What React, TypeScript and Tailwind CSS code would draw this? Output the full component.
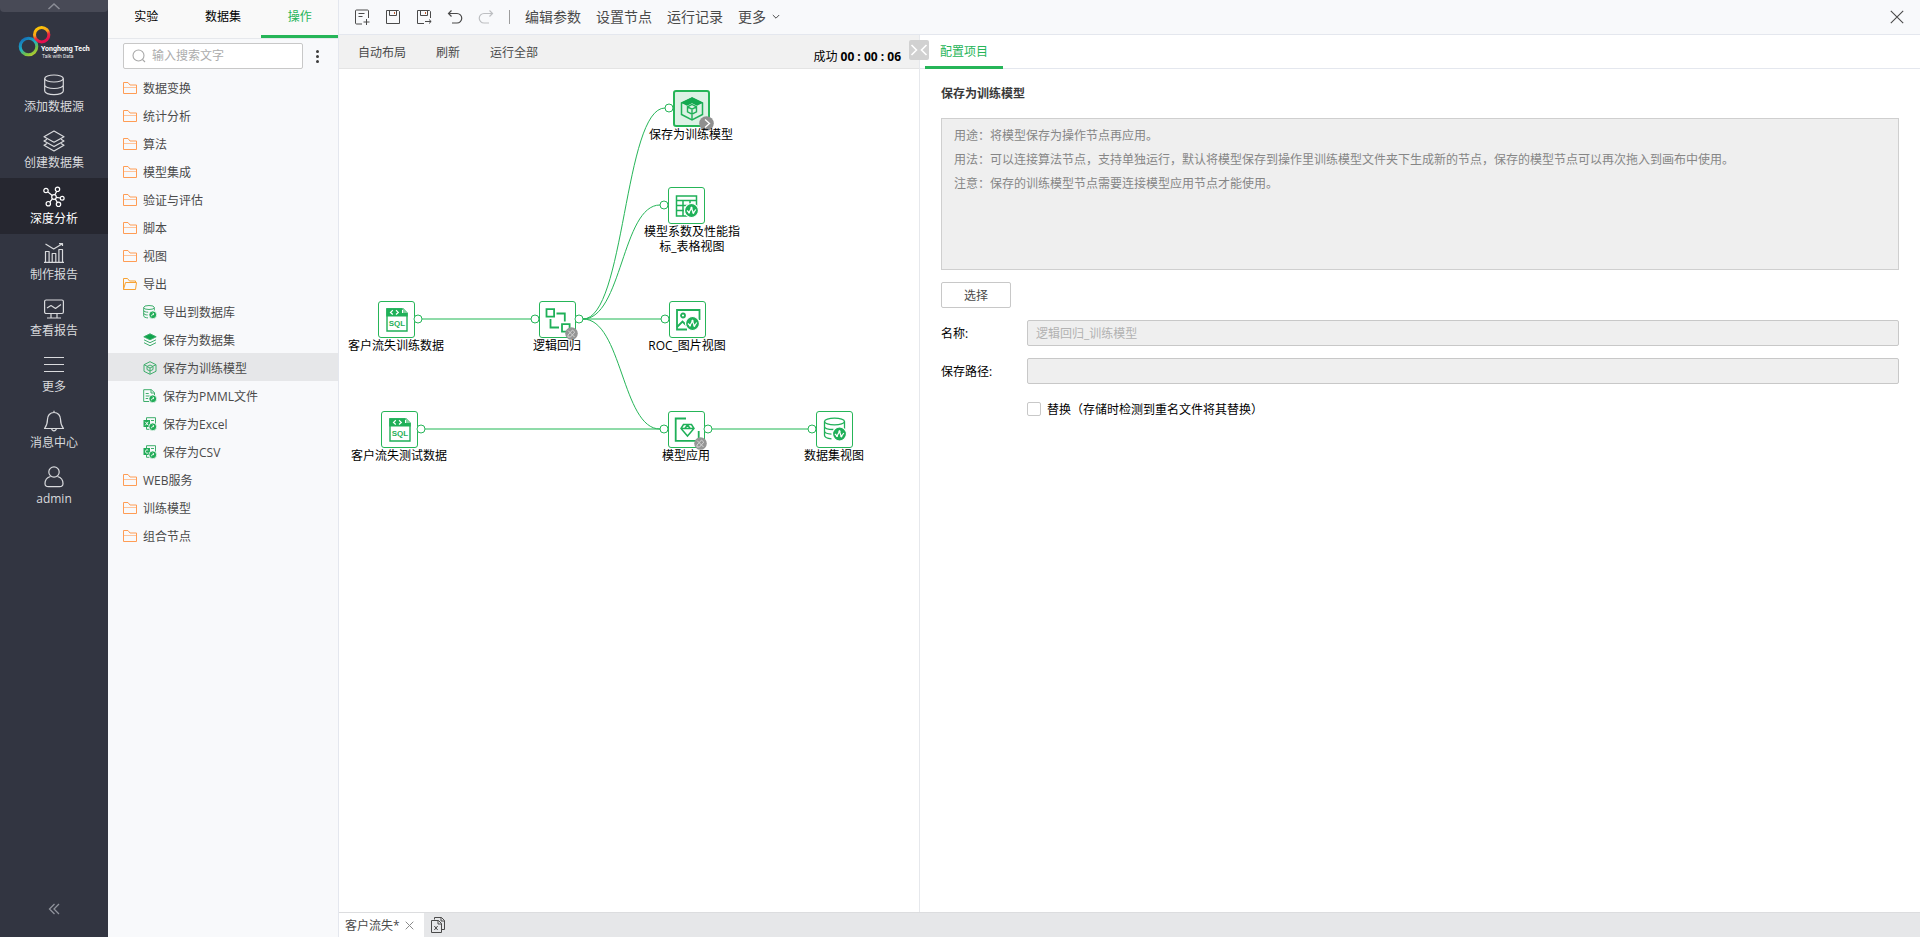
import type { ReactNode } from 'react';

const GREEN = '#26b558';

/* ---------- icons ---------- */

function Logo() {
  return (
    <svg width="76" height="40" viewBox="0 0 76 40" role="img" aria-label="Yonghong Tech">
      <defs>
        <linearGradient id="ringWarm" x1="0" y1="0" x2="0.4" y2="1">
          <stop offset="0" stopColor="#ffd000" />
          <stop offset="0.5" stopColor="#f9a11b" />
          <stop offset="0.7" stopColor="#ee2f3c" />
          <stop offset="1" stopColor="#e5104f" />
        </linearGradient>
        <linearGradient id="ringCool" x1="0.2" y1="0" x2="0.8" y2="1">
          <stop offset="0" stopColor="#1470b8" />
          <stop offset="0.45" stopColor="#1fb0c4" />
          <stop offset="0.75" stopColor="#6fc04a" />
          <stop offset="1" stopColor="#b5cc2e" />
        </linearGradient>
      </defs>
      <circle cx="12.5" cy="22.5" r="8.3" fill="none" stroke="url(#ringCool)" strokeWidth="3" />
      <circle cx="25.7" cy="10.7" r="7.2" fill="none" stroke="url(#ringWarm)" strokeWidth="3" />
      <text x="25" y="27" fontSize="7" fontWeight="700" fill="#ffffff" fontFamily="Roboto, sans-serif">Yonghong Tech</text>
      <text x="26" y="34" fontSize="5" fill="#e8e8ea" fontFamily="Roboto, sans-serif">Talk with Data</text>
    </svg>
  );
}

function NavIcon({ children }: { children: ReactNode }) {
  return (
    <svg width="22" height="22" viewBox="0 0 22 22" fill="none" stroke="currentColor" strokeWidth="1.2" strokeLinejoin="round" aria-hidden="true">
      {children}
    </svg>
  );
}

const navIcons = {
  source: (
    <NavIcon>
      <ellipse cx="11" cy="4.5" rx="9.3" ry="3.5" />
      <path d="M1.7 4.5v12.6c0 2 4.1 3.6 9.3 3.6s9.3-1.6 9.3-3.6V4.5M1.7 11c0 2 4.1 3.5 9.3 3.5s9.3-1.5 9.3-3.5" />
    </NavIcon>
  ),
  layers: (
    <NavIcon>
      <path d="M11 1 21 6.7 11 12.2 1 6.7z" />
      <path d="M4 9.3 1 11l10 5.6L21 11l-3-1.7M4 13.5 1 15.3l10 5.7 10-5.7-3-1.8" />
    </NavIcon>
  ),
  graph: (
    <NavIcon>
      <circle cx="11" cy="11" r="2.3" />
      <circle cx="3" cy="4.5" r="2.2" />
      <circle cx="14.5" cy="3.3" r="2.2" />
      <circle cx="19.2" cy="12.3" r="1.9" />
      <circle cx="5.3" cy="17.7" r="2.2" />
      <circle cx="15.5" cy="18.3" r="2.2" />
      <path d="m4.8 5.9 4.4 3.6M13.7 5.4l-1.8 3.4M13.3 11.3l4 .7M9.4 12.8l-2.6 3.2M12.3 13l2 3.4" />
    </NavIcon>
  ),
  chart: (
    <NavIcon>
      <path d="M1 20.4h20M2.5 20.4V9.5h3.6v10.9M9.2 20.4v-8.9h3.6v8.9M15.9 20.4V7.5h3.6v12.9" />
      <path d="m2.5 2 8.2 5L19 2M16 1.6h3.5V4" />
    </NavIcon>
  ),
  monitor: (
    <NavIcon>
      <rect x="1.6" y="2" width="18.800" height="13.5" rx="1.5" />
      <path d="m4 10 4-2.5 4.5 3L18 6.5M8 15.5v4M14 15.5v4M4 20h14" />
    </NavIcon>
  ),
  more: (
    <NavIcon>
      <path d="M1 3.5h20M1 10.5h20M1 17.5h20" />
    </NavIcon>
  ),
  bell: (
    <NavIcon>
      <path d="M11 2.5c-4 0-6.5 3-6.5 6.8 0 4.5-1 6.7-3 9.2h19c-2-2.5-3-4.7-3-9.2 0-3.8-2.5-6.8-6.5-6.8zM11 2.5V.7M8.6 18.5c.2 1.5 1 2.3 2.4 2.3s2.2-.8 2.4-2.3" />
    </NavIcon>
  ),
  user: (
    <NavIcon>
      <circle cx="11" cy="6" r="5.2" />
      <path d="M7.5 10.5C4 11.5 2 14 2 17.5c0 2.3 1 3.2 3.5 3.2h11c2.5 0 3.5-.9 3.5-3.2 0-3.5-2-6-5.5-7" />
    </NavIcon>
  ),
};

function Folder({ open }: { open?: boolean }) {
  return (
    <svg width="14" height="14" viewBox="0 0 14 14" fill="none" stroke="#ff9d55" strokeWidth="1" aria-hidden="true">
      {open ? (
        <path d="M.5 12.5v-11h4l2 2.500h6v2M.5 12.500l2-7h11l-1 7z" stroke="#f7a233" />
      ) : (
        <>
          <path d="M.5 12.500v-11h4.500l2 2.500h6.500v8.500z" />
          <path d="M1 6.500h12" stroke="#ffc49a" />
        </>
      )}
    </svg>
  );
}

function SmallIcon({ children }: { children: ReactNode }) {
  return (
    <svg width="14" height="14" viewBox="0 0 14 14" fill="none" stroke="#3fae6c" strokeWidth="1" aria-hidden="true">
      {children}
    </svg>
  );
}

function ExportDot() {
  return (
    <g>
      <circle cx="9.8" cy="9.8" r="3.9" fill="#22ac58" stroke="#f8f9fb" strokeWidth="0.8" />
      <path d="M8.300 11.300c.2-1.600 1-2.200 2.400-2.200M9.700 7.800l1.300 1.300-1.300 1.200" stroke="#fff" strokeWidth="0.8" />
    </g>
  );
}

const leafIcons = {
  database: (
    <SmallIcon>
      <ellipse cx="6" cy="2.5" rx="5.3" ry="2" />
      <path d="M.7 2.5V11c0 1 2 1.800 4.300 1.900M11.300 2.500v3M.7 5.500c0 1 2 1.700 4.500 1.700M.7 8.300c0 1 2 1.700 4 1.700" />
      <ExportDot />
    </SmallIcon>
  ),
  dataset: (
    <SmallIcon>
      <path d="m7 .8 6.200 3L7 6.800.8 3.800z" fill="#0fa44c" />
      <path d="M1 6.800 7 9.700l6-2.900M1 9.700l6 3 6-3" />
    </SmallIcon>
  ),
  model: (
    <SmallIcon>
      <path d="m7 .7 6 3v6.600l-6 3-6-3V3.700zM1 3.700l3.300 1.600M13 3.700 9.700 5.300M7 10v3" />
      <path d="m7 4 3 1.500v3L7 10 4 8.500v-3zM4 5.500 7 7l3-1.500M7 7v3" />
    </SmallIcon>
  ),
  pmml: (
    <SmallIcon>
      <path d="M6 12.500H.7V.7h7.600l3.200 3v3M8 .7V4h3.500M2.700 4.500h3M2.700 7h4M2.700 9.500h2.500" />
      <ExportDot />
    </SmallIcon>
  ),
  excel: (
    <SmallIcon>
      <path d="M3.500 3V.7h9V7M3.500 10v2.300h3M8 3.500h3" />
      <rect x="0.5" y="3" width="6.5" height="7" fill="#22ac58" stroke="none" />
      <path d="m2.300 4.800 3 3.500M5.300 4.800l-3 3.500" stroke="#fff" />
      <ExportDot />
    </SmallIcon>
  ),
  csv: (
    <SmallIcon>
      <path d="M3.500 3V.7h9V7M3.500 10v2.300h3M8 3.500h3" />
      <rect x="0.5" y="3" width="6.5" height="7" fill="#22ac58" stroke="none" />
      <path d="M5.200 5.200c-.6-.6-2.700-.7-2.700 1.300s2.100 1.900 2.700 1.300" stroke="#fff" />
      <ExportDot />
    </SmallIcon>
  ),
};

function ToolIcon({ children }: { children: ReactNode }) {
  return (
    <svg width="16" height="16" viewBox="0 0 16 16" fill="none" stroke="currentColor" strokeWidth="1" aria-hidden="true">
      {children}
    </svg>
  );
}

/* ---------- data ---------- */

type NavKey = keyof typeof navIcons;
type LeafKey = keyof typeof leafIcons;

const navItems: { key: NavKey; label: string; active?: boolean }[] = [
  { key: 'source', label: '添加数据源' },
  { key: 'layers', label: '创建数据集' },
  { key: 'graph', label: '深度分析', active: true },
  { key: 'chart', label: '制作报告' },
  { key: 'monitor', label: '查看报告' },
  { key: 'more', label: '更多' },
  { key: 'bell', label: '消息中心' },
  { key: 'user', label: 'admin' },
];

const tree: { label: string; leaf?: LeafKey; open?: boolean; selected?: boolean }[] = [
  { label: '数据变换' },
  { label: '统计分析' },
  { label: '算法' },
  { label: '模型集成' },
  { label: '验证与评估' },
  { label: '脚本' },
  { label: '视图' },
  { label: '导出', open: true },
  { label: '导出到数据库', leaf: 'database' },
  { label: '保存为数据集', leaf: 'dataset' },
  { label: '保存为训练模型', leaf: 'model', selected: true },
  { label: '保存为PMML文件', leaf: 'pmml' },
  { label: '保存为Excel', leaf: 'excel' },
  { label: '保存为CSV', leaf: 'csv' },
  { label: 'WEB服务' },
  { label: '训练模型' },
  { label: '组合节点' },
];

/* ---------- flow canvas ---------- */

function ViewDot({ x, y }: { x: number; y: number }) {
  return (
    <g transform={`translate(${x} ${y})`}>
      <circle r="7" fill="#1fb058" stroke="#fff" strokeWidth="1.2" />
      <path d="M-4.500 0l2 2 2.500-4.500 1.800 5L4.300-1" fill="none" stroke="#fff" strokeWidth="1.2" />
      <circle cx="-2.500" cy="2" r="1" fill="#fff" stroke="none" />
      <circle cx="0" cy="-2.600" r="1.1" fill="#fff" stroke="none" />
      <circle cx="1.900" cy="2.200" r="1" fill="#fff" stroke="none" />
    </g>
  );
}

function NodeIcon({ children }: { children: ReactNode }) {
  return (
    <svg className="shrink-0" width="26" height="26" viewBox="0 0 26 26" fill="none" stroke="#1fb058" strokeWidth="1.8" aria-hidden="true">
      {children}
    </svg>
  );
}

const nodeIcons = {
  sql: (
    <NodeIcon>
      <path d="M3 2h16l4 4v18H3z" fill="#fff" strokeWidth="1.4" />
      <path d="M2.300 1.300H18V6h5.700v3.500H2.300z" fill="#1fb058" stroke="none" />
      <path d="M19 1.300 23.700 6H19z" fill="#7fd09d" stroke="none" />
      <path d="M8.800 3.300 6.500 5.400l2.300 2.100M12 3.300l2.300 2.100L12 7.500" stroke="#fff" strokeWidth="1.2" />
      <text x="13" y="19" textAnchor="middle" fontSize="8" fontWeight="700" fill="#1fb058" stroke="none" fontFamily="Liberation Sans, sans-serif">SQL</text>
    </NodeIcon>
  ),
  model: (
    <NodeIcon>
      <path d="m13 2 10.500 5v11.500L13 24 2.500 18.500V7z" strokeWidth="1.5" />
      <path d="m13 1.300 11 5.400-6 3-5-2.500-5 2.500-6-3z" fill="#14a850" stroke="none" />
      <path d="m13 8.500 4.500 2.300v5L13 18.200l-4.500-2.400v-5zM8.500 10.800l4.500 2.300 4.500-2.300M13 13.100V24" strokeWidth="1.4" />
    </NodeIcon>
  ),
  table: (
    <NodeIcon>
      <path d="M2.500 3h20v20h-20zM2.500 7.500h20M2.500 12.500h20M2.500 17.500h11M9 7.500V23M16 7.500v6" strokeWidth="1.5" />
      <path d="M14 16h12v10H14z" fill="#fff" stroke="none" />
      <ViewDot x={17.5} y={17.5} />
    </NodeIcon>
  ),
  regression: (
    <NodeIcon>
      <path d="M1.500 2.200h7.600v7.400H1.500zM17 17.200h7.600v7.400H17zM11.500 6.500h8.300v8M5.500 12v8.500H14" />
    </NodeIcon>
  ),
  image: (
    <NodeIcon>
      <path d="M12 22.500H2V3h22.500v10" />
      <circle cx="8" cy="8.500" r="2" />
      <path d="m2 20 5.500-5.500 4 4" />
      <ViewDot x={17.5} y={16.5} />
    </NodeIcon>
  ),
  apply: (
    <NodeIcon>
      <path d="M12 1.500H1.700v22.300h23V14" />
      <path d="M9.500 7.500h8l2.500 4-6.500 7.500L7 11.500zM7 11.500h13M10.800 11.500l2.700-3.500 2.700 3.500" strokeWidth="1.5" />
    </NodeIcon>
  ),
  dataset: (
    <NodeIcon>
      <ellipse cx="12.5" cy="4.5" rx="10" ry="3.3" strokeWidth="1.3" />
      <path d="M2.500 4.500v13.800c0 1.800 3 3.200 7 3.600M22.500 4.500v8M2.500 9.500c0 1.800 4 3 9 3M2.500 14c0 1.800 3 2.900 7 3.100" strokeWidth="1.3" />
      <ViewDot x={17.5} y={17} />
    </NodeIcon>
  ),
};

type NodeDef = {
  id: string;
  icon: keyof typeof nodeIcons;
  label: string;
  x: number;
  y: number;
  labelX?: number;
  input?: boolean;
  output?: boolean;
  badge?: 'edit' | 'next';
  selected?: boolean;
};

/* x / y: centre of the node's box on the canvas; labelX: centre of the caption when it differs */
const nodes: NodeDef[] = [
  { id: 'save', icon: 'model', label: '保存为训练模型', x: 352, y: 39, input: true, badge: 'next', selected: true },
  { id: 'table', icon: 'table', label: '模型系数及性能指标_表格视图', x: 347, y: 136, labelX: 353, input: true },
  { id: 'train', icon: 'sql', label: '客户流失训练数据', x: 57, y: 250, output: true },
  { id: 'lr', icon: 'regression', label: '逻辑回归', x: 218, y: 250, input: true, output: true, badge: 'edit' },
  { id: 'roc', icon: 'image', label: 'ROC_图片视图', x: 348, y: 250, input: true },
  { id: 'test', icon: 'sql', label: '客户流失测试数据', x: 60, y: 360, output: true },
  { id: 'apply', icon: 'apply', label: '模型应用', x: 347, y: 360, input: true, output: true, badge: 'edit' },
  { id: 'view', icon: 'dataset', label: '数据集视图', x: 495, y: 360, input: true },
];

function FlowNode({ node }: { node: NodeDef }) {
  return (
    <>
      <div
        className={
          node.selected
            ? 'absolute flex size-[37px] items-center justify-center rounded-[3px] border-2 border-[#26b558] bg-[#dcf2e5]'
            : 'absolute flex size-[37px] items-center justify-center rounded-[3px] border border-[#26b558] bg-white'
        }
        style={{ left: node.x - 18, top: node.y - 18 }}
      >
        {nodeIcons[node.icon]}
        {node.badge === 'next' && (
          <svg className="absolute -right-1.5 -bottom-1.5" width="15" height="15" viewBox="0 0 15 15" fill="none" aria-hidden="true">
            <circle cx="7.5" cy="7.5" r="7.3" fill="#8f8f8f" />
            <path d="m6 3.500 4.500 4L6 11.500" stroke="#fff" strokeWidth="1.3" />
          </svg>
        )}
        {node.badge === 'edit' && (
          <svg className="absolute -right-1 -bottom-1" width="15" height="15" viewBox="0 0 15 15" fill="none" aria-hidden="true">
            <circle cx="7.5" cy="7.5" r="6.3" fill="#959595" />
            <path d="m4 9 4.500-5 2.300 2.200L6.500 11H4zM4 4.500l6.500 6.500" stroke="#d2d2d2" strokeWidth="1" />
          </svg>
        )}
      </div>
      <span
        className="absolute w-24 text-center text-xs leading-[15px] text-black"
        style={{ left: (node.labelX ?? node.x) - 48, top: node.y + 19 }}
      >
        {node.label}
      </span>
    </>
  );
}

function FlowCanvas() {
  return (
    <div className="relative flex-1 overflow-hidden bg-white">
      <svg className="absolute inset-0 size-full" fill="none" aria-hidden="true">
        <g stroke="#8fdba9" strokeWidth="2">
          <path d="M83 250H192M244 250H322M86 360H321M373 360H469" />
        </g>
        <g stroke={GREEN} strokeWidth="1">
          <path d="M244 250C286 250 285 39 326 39" />
          <path d="M244 250C283 250 283 136 321 136" />
          <path d="M244 250C283 250 283 360 321 360" />
        </g>
      </svg>
      {nodes.map((n) => (
        <FlowNode key={n.id} node={n} />
      ))}
      <svg className="absolute inset-0 size-full" fill="#fff" stroke={GREEN} strokeWidth="1" aria-hidden="true">
        {nodes.map((n) => (
          <g key={n.id}>
            {n.input && <circle cx={n.x - 22} cy={n.y} r="4" />}
            {n.output && <circle cx={n.x + 22} cy={n.y} r="4" />}
          </g>
        ))}
      </svg>
    </div>
  );
}

/* ---------- regions ---------- */

function Sidebar() {
  return (
    <nav className="flex w-[108px] shrink-0 flex-col bg-[#323541] text-xs text-[#d9dadd]">
      <button type="button" aria-label="收起顶部" className="flex h-3 items-center justify-center rounded-b-sm bg-[#484a56] text-[#8b8d96]">
        <svg width="14" height="8" viewBox="0 0 14 8" fill="none" stroke="currentColor" strokeWidth="1.5"><path d="m1.500 7 5.500-5 5.500 5" /></svg>
      </button>
      <div className="flex h-[54px] items-start pt-3 pl-4">
        <Logo />
      </div>
      {navItems.map((item) => (
        <a
          key={item.key}
          href={`#${item.key}`}
          className={
            item.active
              ? 'flex h-14 flex-col items-center gap-[3px] bg-[#262730] pt-2 text-white'
              : 'flex h-14 flex-col items-center gap-[3px] pt-2'
          }
        >
          {navIcons[item.key]}
          <span className="leading-4">{item.label}</span>
        </a>
      ))}
      <button type="button" aria-label="折叠菜单" className="mt-auto mb-5 flex h-4 items-center justify-center text-[#8f929b]">
        <svg width="12" height="12" viewBox="0 0 12 12" fill="none" stroke="currentColor" strokeWidth="1.3"><path d="M6.500 1 1.500 6l5 5M11 1 6 6l5 5" /></svg>
      </button>
    </nav>
  );
}

function TreePanel() {
  return (
    <aside className="flex w-[231px] shrink-0 flex-col border-r border-[#e4e7ee] bg-[#f8f9fb] text-xs text-[#4a4a4a]">
      <div role="tablist" className="grid h-[39px] grid-cols-3 border-b border-[#e6e8ec] bg-[#f9f9f9] text-black">
        <button type="button" role="tab" className="pb-1">实验</button>
        <button type="button" role="tab" className="pb-1">数据集</button>
        <button type="button" role="tab" aria-selected="true" className="border-b-3 border-[#26b558] pb-px text-[#26b558]">操作</button>
      </div>
      <div className="flex h-[34px] items-center gap-3 pr-[19px] pl-[15px]">
        <label className="flex h-[26px] flex-1 items-center gap-1.5 rounded-xs border border-[#c8c8c8] bg-white px-2">
          <svg className="shrink-0" width="14" height="14" viewBox="0 0 14 14" fill="none" stroke="#a8a8a8" strokeWidth="1.1" aria-hidden="true">
            <circle cx="6.5" cy="6.5" r="5.5" />
            <path d="m10.500 10.500 2.500 2.500" />
          </svg>
          <input aria-label="搜索" placeholder="输入搜索文字" className="w-full min-w-0 bg-transparent outline-none placeholder:text-[#acacac]" />
        </label>
        <button type="button" aria-label="更多操作" className="flex w-1 flex-col items-center gap-0.5">
          <span className="size-[3px] rounded-full bg-[#3c3c3c]" />
          <span className="size-[3px] rounded-full bg-[#3c3c3c]" />
          <span className="size-[3px] rounded-full bg-[#3c3c3c]" />
        </button>
      </div>
      <ul>
        {tree.map((row) => (
          <li
            key={row.label}
            className={
              row.leaf
                ? row.selected
                  ? 'flex h-7 items-center gap-1.5 bg-[#e6e7e9] pt-0.5 pl-[35px]'
                  : 'flex h-7 items-center gap-1.5 pt-0.5 pl-[35px]'
                : 'flex h-7 items-center gap-1.5 pt-0.5 pl-[15px]'
            }
          >
            {row.leaf ? leafIcons[row.leaf] : <Folder open={row.open} />}
            <span className="pt-0.5">{row.label}</span>
          </li>
        ))}
      </ul>
    </aside>
  );
}

function Toolbar() {
  return (
    <header className="flex h-[35px] shrink-0 items-center border-b border-[#e4e7ee] bg-[#f8f9fb] pr-4 pl-[15px] text-sm text-[#4a4a4a]">
      <div className="flex items-center gap-[15px]">
        <button type="button" aria-label="新建">
          <ToolIcon>
            <path d="M8 15H2.500A1 1 0 0 1 1.500 14V2a1 1 0 0 1 1-1h11a1 1 0 0 1 1 1v7M4.500 4.500h6M4.500 7.500h4M12.500 10v6M9.500 13h6" />
          </ToolIcon>
        </button>
        <button type="button" aria-label="保存">
          <ToolIcon>
            <path d="M1.500 1.500h12l1 1v12h-13zM4.500 1.500v5h7v-5" />
            <path d="M9.500 3v2" stroke="#c25a2c" />
          </ToolIcon>
        </button>
        <button type="button" aria-label="另存为">
          <ToolIcon>
            <path d="M8 14.500H1.500v-13h12l1 1V9M4.500 1.500v5h7v-5M9 12.500h6M13 10.500l2.200 2-2.200 2" />
            <path d="M9.500 3v2" stroke="#c25a2c" />
          </ToolIcon>
        </button>
        <button type="button" aria-label="撤销">
          <ToolIcon>
            <path d="M4.500 1.500 1.500 4.500l3 3M1.500 4.500H10a4.500 4.500 0 0 1 0 9.500H5" strokeWidth="1.2" />
          </ToolIcon>
        </button>
        <button type="button" aria-label="重做" disabled className="text-[#bdbfc2]">
          <ToolIcon>
            <path d="m11.500 1.500 3 3-3 3M14.500 4.500H6a4.500 4.500 0 0 0 0 9.500h5" strokeWidth="1.2" />
          </ToolIcon>
        </button>
      </div>
      <span className="ml-[15px] h-3.5 w-px bg-[#9c9c9c]" />
      <div className="ml-[15px] flex items-center gap-[15px]">
        <button type="button">编辑参数</button>
        <button type="button">设置节点</button>
        <button type="button">运行记录</button>
        <button type="button" className="flex items-center gap-1.5">
          更多
          <svg width="8" height="6" viewBox="0 0 8 6" fill="none" stroke="currentColor"><path d="m.8 1 3.200 3.200L7.200 1" /></svg>
        </button>
      </div>
      <button type="button" aria-label="关闭" className="ml-auto">
        <svg width="14" height="14" viewBox="0 0 14 14" fill="none" stroke="#4a4a4a" strokeWidth="1.1"><path d="m.8.8 12.400 12.400M13.200.8.8 13.200" /></svg>
      </button>
    </header>
  );
}

function Workspace() {
  return (
    <section className="relative flex w-[581px] shrink-0 flex-col border-r border-[#e6e8ec]">
      <div className="flex h-[34px] items-center gap-[30px] border-b border-[#e4e4e4] bg-[#f1f1f1] pt-0.5 pr-[18px] pl-[19px] text-xs text-[#4a4a4a]">
        <button type="button">自动布局</button>
        <button type="button">刷新</button>
        <button type="button">运行全部</button>
        <p className="ml-auto pt-2 text-black">
          成功 <b>00 : 00 : 06</b>
        </p>
      </div>
      <button type="button" aria-label="收起面板" className="absolute top-[5px] -right-2.5 flex h-5 w-5 items-center justify-center rounded-xs bg-[#d1d1d1]">
        <svg width="18" height="12" viewBox="0 0 18 12" fill="none" stroke="#fff" strokeWidth="1.6"><path d="m1.500 1 5 5-5 5M16.500 1l-5 5 5 5" /></svg>
      </button>
      <FlowCanvas />
    </section>
  );
}

function ConfigPanel() {
  return (
    <section className="min-w-0 flex-1 bg-white text-xs text-[#4a4a4a]">
      <div role="tablist" className="flex h-[34px] border-b border-[#e4e7ee] pl-[5px]">
        <button type="button" role="tab" aria-selected="true" className="-mb-px w-[78px] border-b-3 border-[#26b558] pt-0.5 text-[#26b558]">
          配置项目
        </button>
      </div>
      <form className="px-[21px]">
        <h2 className="flex h-[49px] items-center font-bold text-[#3a3a3a]">保存为训练模型</h2>
        <div className="h-[152px] border border-[#cfcfcf] bg-[#efefef] px-3 py-[5px] leading-6 text-[#868686]">
          <p>用途：将模型保存为操作节点再应用。</p>
          <p>用法：可以连接算法节点，支持单独运行，默认将模型保存到操作里训练模型文件夹下生成新的节点，保存的模型节点可以再次拖入到画布中使用。</p>
          <p>注意：保存的训练模型节点需要连接模型应用节点才能使用。</p>
        </div>
        <button type="button" className="mt-3 h-[26px] w-[70px] rounded-xs border border-[#c8c8c8] bg-white pt-px">选择</button>
        <div className="mt-3 grid grid-cols-[86px_1fr] items-center gap-y-3 text-black">
          <label htmlFor="model-name" className="pt-0.5">名称:</label>
          <input id="model-name" disabled defaultValue="逻辑回归_训练模型" className="h-[26px] w-full rounded-xs border border-[#c8c8c8] bg-[#efefef] px-2 text-[#b2b2b2]" />
          <label htmlFor="model-path" className="pt-0.5">保存路径:</label>
          <input id="model-path" disabled className="h-[26px] w-full rounded-xs border border-[#c8c8c8] bg-[#efefef] px-2" />
          <label className="col-start-2 flex h-[26px] items-center gap-1.5">
            <input type="checkbox" className="size-3.5 appearance-none rounded-xs border border-[#c8c8c8] bg-white" />
            <span className="pt-0.5">替换（存储时检测到重名文件将其替换）</span>
          </label>
        </div>
      </form>
    </section>
  );
}

function BottomTabs() {
  return (
    <footer className="flex h-[25px] shrink-0 items-stretch border-t border-[#dcdddf] bg-[#e6e7e9] text-xs text-[#4a4a4a]">
      <div className="flex w-[85px] items-center justify-between bg-white pr-2.5 pl-1.5">
        <span className="pt-0.5">客户流失*</span>
        <button type="button" aria-label="关闭标签">
          <svg width="9" height="9" viewBox="0 0 9 9" fill="none" stroke="#8a8a8a"><path d="m.7.7 7.600 7.600M8.300.7.7 8.300" /></svg>
        </button>
      </div>
      <button type="button" aria-label="新建文件" className="ml-1.5">
        <svg width="16" height="16" viewBox="0 0 16 16" fill="none" stroke="#4a4a4a">
          <path d="M4.500 2.500V.5h7l3 3v9h-3M11 .5V4h3.500" />
          <path d="M1.500 3.500h7l3 3v9h-10zM8 3.500V7h3.500M4.300 9l3.400 4M7.700 9l-3.400 4" />
        </svg>
      </button>
    </footer>
  );
}

export default function App() {
  return (
    <div className="flex min-h-screen font-['Open_Sans','Noto_Sans_CJK_SC',sans-serif]">
      <Sidebar />
      <TreePanel />
      <div className="flex min-w-0 flex-1 flex-col">
        <Toolbar />
        <main className="flex flex-1">
          <Workspace />
          <ConfigPanel />
        </main>
        <BottomTabs />
      </div>
    </div>
  );
}
